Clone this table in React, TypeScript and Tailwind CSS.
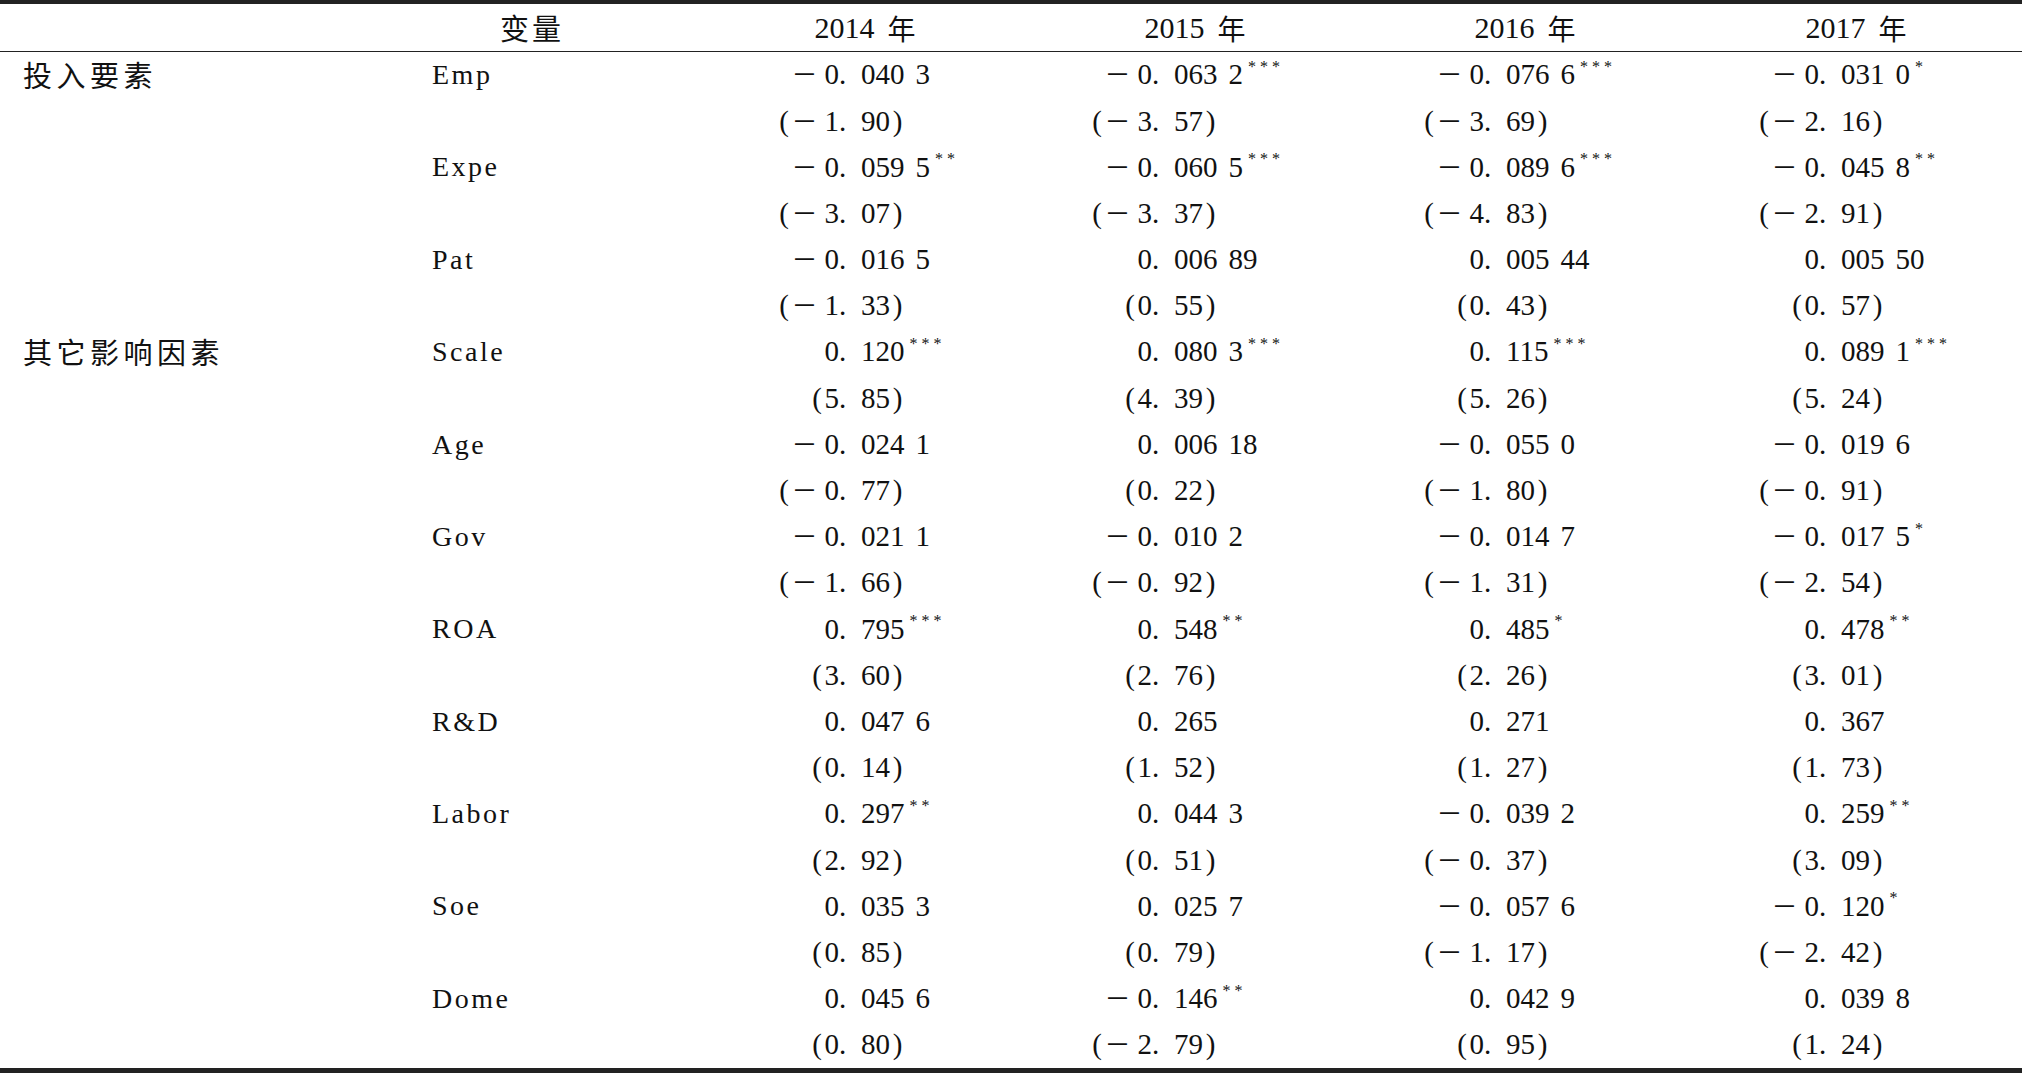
type Cell = { c: string; s?: string; t: string };
type Row = { group?: string; name: string; cells: Cell[] };

const rows: Row[] = [
  {
    group: "投入要素",
    name: "Emp",
    cells: [
      { c: "-0.040 3", t: "-1.90" },
      { c: "-0.063 2", s: "***", t: "-3.57" },
      { c: "-0.076 6", s: "***", t: "-3.69" },
      { c: "-0.031 0", s: "*", t: "-2.16" },
    ],
  },
  {
    name: "Expe",
    cells: [
      { c: "-0.059 5", s: "**", t: "-3.07" },
      { c: "-0.060 5", s: "***", t: "-3.37" },
      { c: "-0.089 6", s: "***", t: "-4.83" },
      { c: "-0.045 8", s: "**", t: "-2.91" },
    ],
  },
  {
    name: "Pat",
    cells: [
      { c: "-0.016 5", t: "-1.33" },
      { c: "0.006 89", t: "0.55" },
      { c: "0.005 44", t: "0.43" },
      { c: "0.005 50", t: "0.57" },
    ],
  },
  {
    group: "其它影响因素",
    name: "Scale",
    cells: [
      { c: "0.120", s: "***", t: "5.85" },
      { c: "0.080 3", s: "***", t: "4.39" },
      { c: "0.115", s: "***", t: "5.26" },
      { c: "0.089 1", s: "***", t: "5.24" },
    ],
  },
  {
    name: "Age",
    cells: [
      { c: "-0.024 1", t: "-0.77" },
      { c: "0.006 18", t: "0.22" },
      { c: "-0.055 0", t: "-1.80" },
      { c: "-0.019 6", t: "-0.91" },
    ],
  },
  {
    name: "Gov",
    cells: [
      { c: "-0.021 1", t: "-1.66" },
      { c: "-0.010 2", t: "-0.92" },
      { c: "-0.014 7", t: "-1.31" },
      { c: "-0.017 5", s: "*", t: "-2.54" },
    ],
  },
  {
    name: "ROA",
    cells: [
      { c: "0.795", s: "***", t: "3.60" },
      { c: "0.548", s: "**", t: "2.76" },
      { c: "0.485", s: "*", t: "2.26" },
      { c: "0.478", s: "**", t: "3.01" },
    ],
  },
  {
    name: "R&D",
    cells: [
      { c: "0.047 6", t: "0.14" },
      { c: "0.265", t: "1.52" },
      { c: "0.271", t: "1.27" },
      { c: "0.367", t: "1.73" },
    ],
  },
  {
    name: "Labor",
    cells: [
      { c: "0.297", s: "**", t: "2.92" },
      { c: "0.044 3", t: "0.51" },
      { c: "-0.039 2", t: "-0.37" },
      { c: "0.259", s: "**", t: "3.09" },
    ],
  },
  {
    name: "Soe",
    cells: [
      { c: "0.035 3", t: "0.85" },
      { c: "0.025 7", t: "0.79" },
      { c: "-0.057 6", t: "-1.17" },
      { c: "-0.120", s: "*", t: "-2.42" },
    ],
  },
  {
    name: "Dome",
    cells: [
      { c: "0.045 6", t: "0.80" },
      { c: "-0.146", s: "**", t: "-2.79" },
      { c: "0.042 9", t: "0.95" },
      { c: "0.039 8", t: "1.24" },
    ],
  },
];

const years = ["2014", "2015", "2016", "2017"];

// width up to the decimal point, per year column (numbers are decimal aligned)
const pre = ["w-[139px]", "w-[122px]", "w-[124px]", "w-[129px]"];

const grid = "grid grid-cols-[420px_280px_330px_330px_330px_332px]";
const latin = "[font-family:'Liberation_Serif','Noto_Sans_CJK_SC',serif]";
const cjk = "[font-family:'Noto_Sans_CJK_SC',sans-serif]";

function split(v: string) {
  const neg = v.startsWith("-");
  const body = neg ? v.slice(1) : v;
  const i = body.indexOf(".");
  return { neg, int: body.slice(0, i), groups: body.slice(i + 1).split(" ") };
}

function Minus() {
  return <span className={`${cjk} inline-block w-[33px] text-left text-[26px]`}>－</span>;
}

function Decimals({ groups }: { groups: string[] }) {
  return (
    <>
      <span className="inline-block w-[22px]">.</span>
      {groups.map((g, i) => (
        <span key={i} className={i > 0 ? "ml-[11px]" : ""}>
          {g}
        </span>
      ))}
    </>
  );
}

function NumCell({ cell, col }: { cell: Cell; col: number }) {
  const c = split(cell.c);
  const t = split(cell.t);
  return (
    <div className={`flex flex-col ${latin} text-[29px] text-[#111]`}>
      <div className="flex h-[46.2px] items-center whitespace-nowrap">
        <span className={`${pre[col]} shrink-0 text-right`}>
          {c.neg && <Minus />}
          {c.int}
        </span>
        <Decimals groups={c.groups} />
        {cell.s && (
          <span className="relative -top-[8px] ml-[5px] text-[16px] tracking-[4px]">
            {cell.s}
          </span>
        )}
      </div>
      <div className="flex h-[46.2px] items-center whitespace-nowrap">
        <span className={`${pre[col]} shrink-0 text-right`}>
          <span className="inline-block w-[15px] text-center">(</span>
          {t.neg && <Minus />}
          {t.int}
        </span>
        <Decimals groups={t.groups} />
        <span className="inline-block w-[15px] text-center">)</span>
      </div>
    </div>
  );
}

export default function App() {
  return (
    <div className="min-h-screen w-[2022px] bg-white text-[#111]">
      {/* Header */}
      <div className={`${grid} h-[52px] border-t-4 border-b border-[#222] items-center`}>
        <div />
        <div className={`${cjk} pl-[80px] text-[29px] tracking-[3px]`}>变量</div>
        {years.map((y) => (
          <div key={y} className="flex items-center justify-center gap-[13px]">
            <span className={`${latin} text-[30px]`}>{y}</span>
            <span className={`${cjk} text-[28px]`}>年</span>
          </div>
        ))}
      </div>

      {/* Body */}
      <div className="flex flex-col">
        {rows.map((r) => (
          <div key={r.name} className={grid}>
            <div className={`${cjk} flex h-[46.2px] items-center pl-[23px] text-[29px] tracking-[4.5px]`}>
              {r.group}
            </div>
            <div className={`${latin} flex h-[46.2px] items-center pl-[12px] text-[28px] tracking-[2.5px]`}>
              {r.name}
            </div>
            {r.cells.map((cell, i) => (
              <NumCell key={i} cell={cell} col={i} />
            ))}
          </div>
        ))}
      </div>

      <div className="h-[5px] bg-[#222]" />
    </div>
  );
}
